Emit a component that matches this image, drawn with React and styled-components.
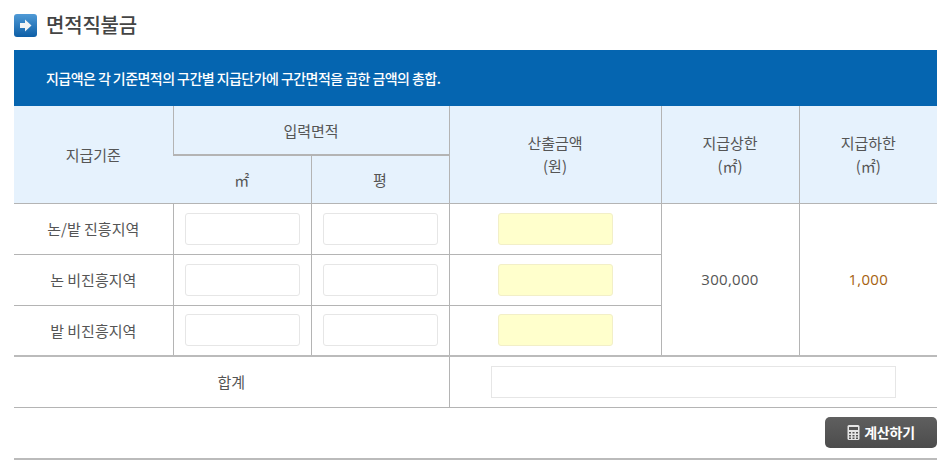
import React from "react";
import styled, { createGlobalStyle } from "styled-components";

const Global = createGlobalStyle`
  html, body { margin: 0; padding: 0; background: #fff; }
  body { font-family: "Noto Sans CJK KR", "Noto Sans", sans-serif; color: #555; }
`;

const Page = styled.div`
  width: 923px;
  margin-left: 14px;
  padding-top: 13px;
`;

const TitleRow = styled.div`
  display: flex;
  align-items: center;
  gap: 9px;
  height: 24px;
  margin-bottom: 13px;
`;

const Title = styled.h2`
  margin: 0;
  font-size: 20px;
  font-weight: 500;
  line-height: 24px;
  letter-spacing: -0.2px;
  color: #444;
`;

const Notice = styled.p`
  margin: 0;
  height: 56px;
  padding-left: 32px;
  box-sizing: border-box;
  background: #0565b0;
  color: #fff;
  font-size: 14px;
  font-weight: 500;
  line-height: 57px;
  letter-spacing: -0.55px;
`;

const Table = styled.table`
  width: 923px;
  table-layout: fixed;
  border-collapse: collapse;
  border-spacing: 0;
  font-size: 15px;
  border-bottom: 1px solid #bbb;
`;

const Head = styled.th`
  height: ${(p) => p.$h || 48}px;
  padding: 0;
  box-sizing: border-box;
  background: #e6f2fd;
  font-weight: 400;
  line-height: 23px;
  color: #555;
  text-align: center;
  border-left: 1px solid #b4b4b4;
  border-bottom: ${(p) => (p.$heavy ? "2px solid #b4b4b4" : "1px solid #b4b4b4")};
  &:first-child { border-left: 0; }
`;

const Cell = styled.td`
  height: 51px;
  padding: 0;
  box-sizing: border-box;
  text-align: center;
  color: ${(p) => p.$color || "#555"};
  font-family: ${(p) => (p.$num ? '"Open Sans", sans-serif' : "inherit")};
  letter-spacing: ${(p) => (p.$num ? "0.3px" : "0")};
  border-left: ${(p) => (p.$first ? "0" : "1px solid #b4b4b4")};
  border-bottom: ${(p) => (p.$heavy ? "2px solid #bbb" : "1px solid #b4b4b4")};
`;

const Field = styled.input`
  display: block;
  margin: 0 auto;
  width: ${(p) => p.$w || 115}px;
  height: 32px;
  padding: 0;
  box-sizing: border-box;
  border: 1px solid ${(p) => (p.$tint ? "#f2efc8" : "#e6e6e6")};
  border-radius: ${(p) => (p.$square ? 0 : 3)}px;
  background: ${(p) => (p.$tint ? "#ffffcc" : "#fff")};
`;

const Actions = styled.div`
  display: flex;
  justify-content: flex-end;
  padding: 9px 0 10px;
  border-bottom: 2px solid #bbb;
`;

const Button = styled.button`
  display: flex;
  align-items: center;
  justify-content: center;
  gap: 4px;
  width: 112px;
  height: 31px;
  padding: 0;
  border: 0;
  border-radius: 5px;
  background: linear-gradient(#5f5f5f, #4c4c4c);
  color: #fff;
  font-family: inherit;
  font-size: 14px;
  font-weight: 700;
  letter-spacing: -0.2px;
`;

const ArrowIcon = () => (
  <svg width="23" height="23" viewBox="0 0 23 23">
    <defs>
      <linearGradient id="tile" x1="0" y1="0" x2="0" y2="1">
        <stop offset="0" stopColor="#4f9ad6" />
        <stop offset="1" stopColor="#0d5ea6" />
      </linearGradient>
    </defs>
    <rect width="23" height="23" rx="3" fill="url(#tile)" />
    <path d="M6 9h5V5.5l6.5 6-6.5 6V14H6z" fill="#f4f4f4" />
  </svg>
);

const CalcIcon = () => (
  <svg width="13" height="15" viewBox="0 0 13 15">
    <rect x="0.5" y="0" width="12" height="15" rx="1.5" fill="#e6e6e6" />
    <rect x="2" y="2" width="9" height="3" fill="#555" />
    <path d="M2 7h2v1.5H2zM5.5 7h2v1.5h-2zM9 7h2v1.5H9zM2 10h2v1.5H2zM5.5 10h2v1.5h-2zM9 10h2v1.5H9zM2 12.5h2V14H2zM5.5 12.5h2V14h-2zM9 12.5h2V14H9z" fill="#555" />
  </svg>
);

const rows = ["논/밭 진흥지역", "논 비진흥지역", "밭 비진흥지역"];

export default function App() {
  return (
    <Page>
      <Global />
      <TitleRow>
        <ArrowIcon />
        <Title>면적직불금</Title>
      </TitleRow>
      <Notice>지급액은 각 기준면적의 구간별 지급단가에 구간면적을 곱한 금액의 총합.</Notice>
      <Table>
        <colgroup>
          <col style={{ width: 159 }} />
          <col style={{ width: 138 }} />
          <col style={{ width: 138 }} />
          <col style={{ width: 212 }} />
          <col style={{ width: 138 }} />
          <col style={{ width: 138 }} />
        </colgroup>
        <thead>
          <tr>
            <Head rowSpan={2}>지급기준</Head>
            <Head colSpan={2} $heavy $h={49}>입력면적</Head>
            <Head rowSpan={2}>산출금액<br />(원)</Head>
            <Head rowSpan={2}>지급상한<br />(㎡)</Head>
            <Head rowSpan={2}>지급하한<br />(㎡)</Head>
          </tr>
          <tr>
            <Head>㎡</Head>
            <Head>평</Head>
          </tr>
        </thead>
        <tbody>
          {rows.map((label, i) => (
            <tr key={label}>
              <Cell $first $heavy={i === 2}>{label}</Cell>
              <Cell $heavy={i === 2}><Field aria-label={`${label} ㎡`} /></Cell>
              <Cell $heavy={i === 2}><Field aria-label={`${label} 평`} /></Cell>
              <Cell $heavy={i === 2}><Field $tint aria-label={`${label} 산출금액`} /></Cell>
              {i === 0 && <Cell rowSpan={3} $num $heavy>300,000</Cell>}
              {i === 0 && <Cell rowSpan={3} $num $heavy $color="#a5610f">1,000</Cell>}
            </tr>
          ))}
          <tr>
            <Cell colSpan={3} $first>합계</Cell>
            <Cell colSpan={3}><Field $w={405} $square aria-label="합계" /></Cell>
          </tr>
        </tbody>
      </Table>
      <Actions>
        <Button type="button"><CalcIcon />계산하기</Button>
      </Actions>
    </Page>
  );
}
